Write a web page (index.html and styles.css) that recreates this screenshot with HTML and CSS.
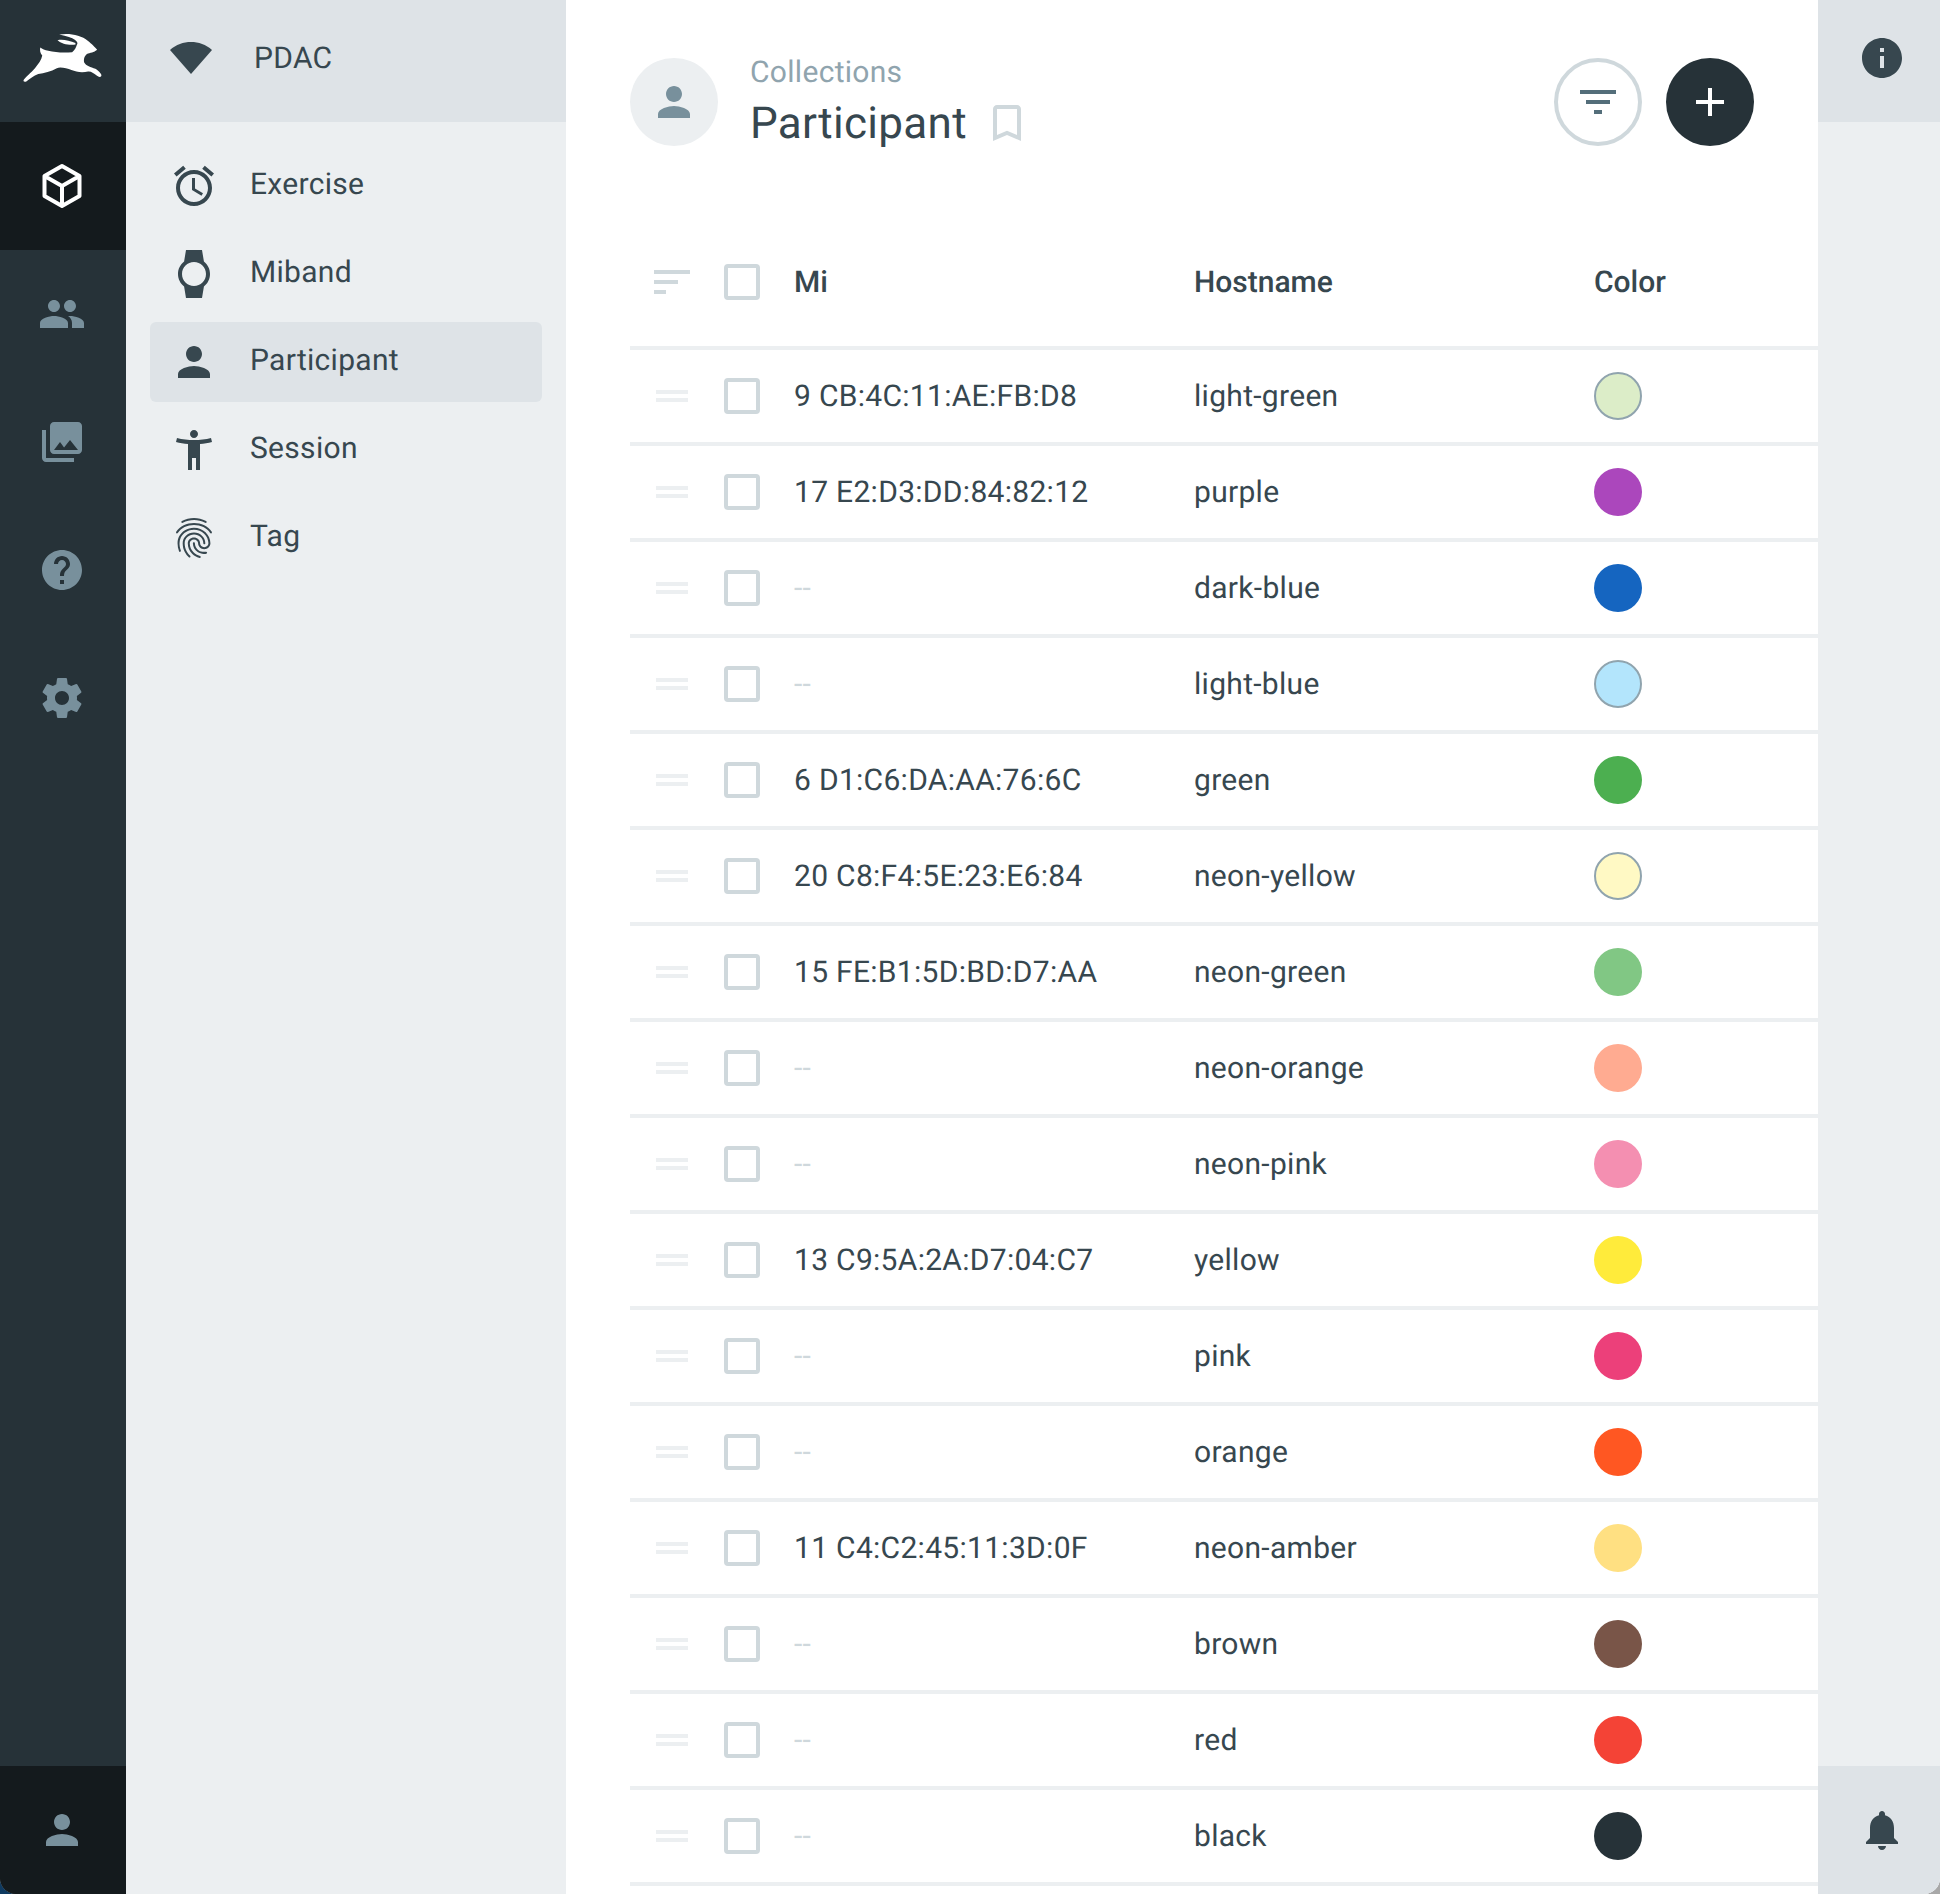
FILE: index.html
```html
<!DOCTYPE html>
<html lang="en">
<head>
<meta charset="utf-8">
<title>Participant</title>
<link rel="stylesheet" href="styles.css">
</head>
<body>
<div class="app">
  <nav class="rail">
    <div class="rail-logo">
      <svg class="logo" viewBox="60 90 250 170"><path fill="#fff" d="M68 240C72 232 92 216 102 204C112 192 122 180 124 166C118 160 116 150 118 142C124 146 132 150 142 152C165 158 195 158 214 156C222 150 226 140 228 134C236 126 222 112 175 103C205 98 240 104 262 122C272 130 284 142 289 148C286 154 272 158 262 160C252 164 248 176 250 186C256 198 270 200 284 206C294 212 304 222 302 228C298 233 292 230 286 225C278 219 272 213 262 214C246 218 226 216 212 210C198 204 178 200 168 204C150 214 130 218 112 222C98 226 86 238 76 244C70 246 66 244 68 240Z"/><path fill="#fff" d="M170 120C186 116 206 122 224 128L224 133C204 135 182 132 170 120Z"/></svg>
    </div>
    <a class="rail-item rail-item-active">
      <svg class="cube" viewBox="0 0 48 48"><path d="M24 4L41.5 14V34L24 44L6.5 34V14ZM6.5 14L24 24L41.5 14M24 24V44"/></svg>
    </a>
    <a class="rail-item"><svg class="icon icon-muted" viewBox="0 0 24 24"><path d="M16 11c1.66 0 2.99-1.34 2.99-3S17.66 5 16 5c-1.66 0-3 1.34-3 3s1.34 3 3 3zm-8 0c1.66 0 2.99-1.34 2.99-3S9.66 5 8 5C6.34 5 5 6.34 5 8s1.34 3 3 3zm0 2c-2.33 0-7 1.17-7 3.5V19h14v-2.5c0-2.33-4.67-3.5-7-3.5zm8 0c-.29 0-.62.02-.97.05 1.16.84 1.97 1.97 1.97 3.45V19h6v-2.5c0-2.33-4.67-3.5-7-3.5z"/></svg></a>
    <a class="rail-item"><svg class="icon icon-muted" viewBox="0 0 24 24"><path d="M22 16V4c0-1.1-.9-2-2-2H8c-1.1 0-2 .9-2 2v12c0 1.1.9 2 2 2h12c1.1 0 2-.9 2-2zm-11-4l2.03 2.71L16 11l4 5H8l3-4zM2 6v14c0 1.1.9 2 2 2h14v-2H4V6H2z"/></svg></a>
    <a class="rail-item"><svg class="icon icon-muted" viewBox="0 0 24 24"><path d="M12 2C6.48 2 2 6.48 2 12s4.48 10 10 10 10-4.48 10-10S17.52 2 12 2zm1 17h-2v-2h2v2zm2.07-7.75l-.9.92C13.45 12.9 13 13.5 13 15h-2v-.5c0-1.1.45-2.1 1.17-2.83l1.24-1.26c.37-.36.59-.86.59-1.41 0-1.1-.9-2-2-2s-2 .9-2 2H8c0-2.21 1.79-4 4-4s4 1.79 4 4c0 .88-.36 1.68-.93 2.25z"/></svg></a>
    <a class="rail-item"><svg class="icon icon-muted" viewBox="0 0 24 24"><path d="M19.43 12.98c.04-.32.07-.64.07-.98s-.03-.66-.07-.98l2.11-1.65c.19-.15.24-.42.12-.64l-2-3.46c-.12-.22-.39-.3-.61-.22l-2.49 1c-.52-.4-1.08-.73-1.69-.98l-.38-2.65C14.46 2.18 14.25 2 14 2h-4c-.25 0-.46.18-.49.42l-.38 2.65c-.61.25-1.17.59-1.69.98l-2.49-1c-.23-.09-.49 0-.61.22l-2 3.46c-.13.22-.07.49.12.64l2.11 1.65c-.04.32-.07.65-.07.98s.03.66.07.98l-2.11 1.65c-.19.15-.24.42-.12.64l2 3.46c.12.22.39.3.61.22l2.49-1c.52.4 1.08.73 1.69.98l.38 2.65c.03.24.24.42.49.42h4c.25 0 .46-.18.49-.42l.38-2.65c.61-.25 1.17-.59 1.69-.98l2.49 1c.23.09.49 0 .61-.22l2-3.46c.12-.22.07-.49-.12-.64l-2.11-1.65zM12 15.5c-1.93 0-3.5-1.57-3.5-3.5s1.57-3.5 3.5-3.5 3.5 1.57 3.5 3.5-1.57 3.5-3.5 3.5z"/></svg></a>
    <a class="rail-item rail-user"><svg class="icon icon-muted" viewBox="0 0 24 24"><path d="M12 12c2.21 0 4-1.79 4-4s-1.79-4-4-4-4 1.79-4 4 1.79 4 4 4zm0 2c-2.67 0-8 1.34-8 4v2h16v-2c0-2.66-5.33-4-8-4z"/></svg></a>
  </nav>

  <aside class="panel">
    <div class="panel-head">
      <svg class="sector" viewBox="0 0 42 32"><path d="M0 8C12-2.6 30-2.6 42 8L21 32Z"/></svg>
      <span class="panel-title">PDAC</span>
    </div>
    <ul class="collections">
      <li class="collection"><svg class="icon icon-dark" viewBox="0 0 24 24"><path d="M22 5.72l-4.6-3.86-1.29 1.53 4.6 3.86L22 5.72zM7.88 3.39L6.6 1.86 2 5.71l1.29 1.53 4.59-3.85zM12.5 8H11v6l4.75 2.85.75-1.23-4-2.37V8zM12 4c-4.97 0-9 4.03-9 9s4.02 9 9 9c4.97 0 9-4.03 9-9s-4.03-9-9-9zm0 16c-3.87 0-7-3.13-7-7s3.13-7 7-7 7 3.13 7 7-3.13 7-7 7z"/></svg><span class="collection-label">Exercise</span></li>
      <li class="collection"><svg class="icon icon-dark" viewBox="0 0 24 24"><path d="M20 12c0-2.54-1.19-4.81-3.04-6.27L16 0H8l-.95 5.73C5.19 7.19 4 9.45 4 12s1.19 4.81 3.05 6.27L8 24h8l.96-5.73C18.81 16.81 20 14.54 20 12zM6 12c0-3.31 2.69-6 6-6s6 2.69 6 6-2.69 6-6 6-6-2.69-6-6z"/></svg><span class="collection-label">Miband</span></li>
      <li class="collection collection-active"><svg class="icon icon-dark" viewBox="0 0 24 24"><path d="M12 12c2.21 0 4-1.79 4-4s-1.79-4-4-4-4 1.79-4 4 1.79 4 4 4zm0 2c-2.67 0-8 1.34-8 4v2h16v-2c0-2.66-5.33-4-8-4z"/></svg><span class="collection-label">Participant</span></li>
      <li class="collection"><svg class="icon icon-dark" viewBox="0 0 24 24"><path d="M20.5 6c-2.61.7-5.67 1-8.5 1s-5.89-.3-8.5-1L3 8c1.86.5 4 .83 6 1v13h2v-6h2v6h2V9c2-.17 4.14-.5 6-1l-.5-2zM12 6c1.1 0 2-.9 2-2s-.9-2-2-2-2 .9-2 2 .9 2 2 2z"/></svg><span class="collection-label">Session</span></li>
      <li class="collection"><svg class="icon icon-dark" viewBox="0 0 24 24"><path d="M17.81 4.47c-.08 0-.16-.02-.23-.06C15.66 3.42 14 3 12.01 3c-1.98 0-3.86.47-5.57 1.41-.24.13-.54.04-.68-.2-.13-.24-.04-.55.2-.68C7.82 2.52 9.86 2 12.01 2c2.13 0 3.99.47 6.03 1.52.25.13.34.43.21.67-.09.18-.26.28-.44.28zM3.5 9.72c-.1 0-.2-.03-.29-.09-.23-.16-.28-.47-.12-.7.99-1.4 2.25-2.5 3.75-3.27C9.98 4.04 14 4.03 17.15 5.65c1.5.77 2.76 1.86 3.75 3.25.16.22.11.54-.12.7-.23.16-.54.11-.7-.12-.9-1.26-2.04-2.25-3.39-2.94-2.87-1.47-6.54-1.47-9.4.01-1.36.7-2.5 1.7-3.4 2.96-.08.14-.23.21-.39.21zm6.25 12.07c-.13 0-.26-.05-.35-.15-.87-.87-1.34-1.43-2.01-2.64-.69-1.23-1.05-2.73-1.05-4.34 0-2.97 2.54-5.39 5.66-5.39s5.66 2.42 5.66 5.39c0 .28-.22.5-.5.5s-.5-.22-.5-.5c0-2.42-2.09-4.39-4.66-4.39-2.57 0-4.66 1.97-4.66 4.39 0 1.44.32 2.77.93 3.85.64 1.15 1.08 1.64 1.85 2.42.19.2.19.51 0 .71-.11.1-.24.15-.37.15zm7.17-1.85c-1.19 0-2.24-.3-3.1-.89-1.49-1.01-2.38-2.65-2.38-4.39 0-.28.22-.5.5-.5s.5.22.5.5c0 1.41.72 2.74 1.94 3.56.71.48 1.54.71 2.54.71.24 0 .64-.03 1.04-.1.27-.05.53.13.58.41.05.27-.13.53-.41.58-.57.11-1.07.12-1.21.12zM14.91 22c-.04 0-.09-.01-.13-.02-1.59-.44-2.63-1.03-3.72-2.1-1.4-1.39-2.17-3.24-2.17-5.22 0-1.62 1.38-2.94 3.08-2.94 1.7 0 3.08 1.32 3.08 2.94 0 1.07.93 1.94 2.08 1.94s2.08-.87 2.08-1.94c0-3.77-3.25-6.83-7.25-6.83-2.84 0-5.44 1.58-6.61 4.03-.39.81-.59 1.76-.59 2.8 0 .78.07 2.01.67 3.61.1.26-.03.55-.29.64-.26.1-.55-.04-.64-.29-.49-1.31-.73-2.61-.73-3.96 0-1.2.23-2.29.68-3.24 1.33-2.79 4.28-4.6 7.51-4.6 4.55 0 8.25 3.51 8.25 7.83 0 1.62-1.38 2.94-3.08 2.94s-3.08-1.32-3.08-2.94c0-1.07-.93-1.94-2.08-1.94s-2.08.87-2.08 1.94c0 1.71.66 3.31 1.87 4.51.95.94 1.86 1.46 3.27 1.85.27.07.42.35.35.61-.05.23-.26.38-.47.38z"/></svg><span class="collection-label">Tag</span></li>
    </ul>
  </aside>

  <main class="main">
    <header class="page-head">
      <div class="avatar"><svg class="icon icon-muted" viewBox="0 0 24 24"><path d="M12 12c2.21 0 4-1.79 4-4s-1.79-4-4-4-4 1.79-4 4 1.79 4 4 4zm0 2c-2.67 0-8 1.34-8 4v2h16v-2c0-2.66-5.33-4-8-4z"/></svg></div>
      <div class="titles">
        <div class="crumb">Collections</div>
        <div class="title-line">
          <h1 class="title">Participant</h1>
          <svg class="icon icon-line" viewBox="0 0 24 24"><path d="M17 3H7c-1.1 0-2 .9-2 2v16l7-3 7 3V5c0-1.1-.9-2-2-2zm0 15l-5-2.18L7 18V5h10v13z"/></svg>
        </div>
      </div>
      <div class="actions">
        <button class="btn btn-outline"><svg class="icon icon-slate" viewBox="0 0 24 24"><path d="M10 18h4v-2h-4v2zM3 6v2h18V6H3zm3 7h12v-2H6v2z"/></svg></button>
        <button class="btn btn-solid"><svg class="icon icon-white" viewBox="0 0 24 24"><path d="M19 13h-6v6h-2v-6H5v-2h6V5h2v6h6v2z"/></svg></button>
      </div>
    </header>

    <div class="table">
      <div class="row row-head">
        <div class="sort"><i class="sort-a"></i><i class="sort-b"></i><i class="sort-c"></i></div>
        <span class="check"></span>
        <span class="th">Mi</span><span class="th">Hostname</span><span class="th">Color</span>
      </div>
      <div class="row"><div class="handle"></div><span class="check"></span><span class="td">9 CB:4C:11:AE:FB:D8</span><span class="td">light-green</span><span class="swatch swatch-light c-light-green"></span></div>
      <div class="row"><div class="handle"></div><span class="check"></span><span class="td">17 E2:D3:DD:84:82:12</span><span class="td">purple</span><span class="swatch c-purple"></span></div>
      <div class="row"><div class="handle"></div><span class="check"></span><span class="td td-empty">--</span><span class="td">dark-blue</span><span class="swatch c-dark-blue"></span></div>
      <div class="row"><div class="handle"></div><span class="check"></span><span class="td td-empty">--</span><span class="td">light-blue</span><span class="swatch swatch-light c-light-blue"></span></div>
      <div class="row"><div class="handle"></div><span class="check"></span><span class="td">6 D1:C6:DA:AA:76:6C</span><span class="td">green</span><span class="swatch c-green"></span></div>
      <div class="row"><div class="handle"></div><span class="check"></span><span class="td">20 C8:F4:5E:23:E6:84</span><span class="td">neon-yellow</span><span class="swatch swatch-light c-neon-yellow"></span></div>
      <div class="row"><div class="handle"></div><span class="check"></span><span class="td">15 FE:B1:5D:BD:D7:AA</span><span class="td">neon-green</span><span class="swatch c-neon-green"></span></div>
      <div class="row"><div class="handle"></div><span class="check"></span><span class="td td-empty">--</span><span class="td">neon-orange</span><span class="swatch c-neon-orange"></span></div>
      <div class="row"><div class="handle"></div><span class="check"></span><span class="td td-empty">--</span><span class="td">neon-pink</span><span class="swatch c-neon-pink"></span></div>
      <div class="row"><div class="handle"></div><span class="check"></span><span class="td">13 C9:5A:2A:D7:04:C7</span><span class="td">yellow</span><span class="swatch c-yellow"></span></div>
      <div class="row"><div class="handle"></div><span class="check"></span><span class="td td-empty">--</span><span class="td">pink</span><span class="swatch c-pink"></span></div>
      <div class="row"><div class="handle"></div><span class="check"></span><span class="td td-empty">--</span><span class="td">orange</span><span class="swatch c-orange"></span></div>
      <div class="row"><div class="handle"></div><span class="check"></span><span class="td">11 C4:C2:45:11:3D:0F</span><span class="td">neon-amber</span><span class="swatch c-neon-amber"></span></div>
      <div class="row"><div class="handle"></div><span class="check"></span><span class="td td-empty">--</span><span class="td">brown</span><span class="swatch c-brown"></span></div>
      <div class="row"><div class="handle"></div><span class="check"></span><span class="td td-empty">--</span><span class="td">red</span><span class="swatch c-red"></span></div>
      <div class="row"><div class="handle"></div><span class="check"></span><span class="td td-empty">--</span><span class="td">black</span><span class="swatch c-black"></span></div>
    </div>
  </main>

  <aside class="side">
    <div class="side-top"><svg class="icon icon-dark" viewBox="0 0 24 24"><path d="M12 2C6.48 2 2 6.48 2 12s4.48 10 10 10 10-4.48 10-10S17.52 2 12 2zm1 15h-2v-6h2v6zm0-8h-2V7h2v2z"/></svg></div>
    <div class="side-bottom"><svg class="icon icon-dark" viewBox="0 0 24 24"><path d="M12 22c1.1 0 2-.9 2-2h-4c0 1.1.89 2 2 2zm6-6v-5c0-3.07-1.64-5.64-4.5-6.32V4c0-.83-.67-1.5-1.5-1.5s-1.5.67-1.5 1.5v.68C7.63 5.36 6 7.92 6 11v5l-2 2v1h16v-1l-2-2z"/></svg></div>
  </aside>
</div>
</body>
</html>
```
FILE: styles.css
```css
* { box-sizing: border-box; }
html, body { margin: 0; height: 100%; }
body {
  background: linear-gradient(to right, #0f3a60 50%, #a8a8a8 50%);
  font-family: Roboto, "Liberation Sans", sans-serif;
  color: #37474f;
  overflow: hidden;
  text-rendering: geometricPrecision;
}
.app {
  display: flex;
  width: 1940px;
  height: 1894px;
  border-radius: 0 0 16px 16px;
  overflow: hidden;
  background: #eceff1;
}
.icon { display: block; width: 48px; height: 48px; flex: none; }
.icon-muted { fill: #78909c; }
.icon-dark { fill: #37474f; }
.icon-line { fill: #cfd8dc; }
.icon-slate { fill: #546e7a; }
.icon-white { fill: #fff; }

.rail {
  display: flex;
  flex-direction: column;
  flex: none;
  width: 126px;
  background: #263238;
}
.rail-logo {
  display: flex;
  align-items: center;
  justify-content: center;
  height: 122px;
  padding: 0 2px 6px 0;
}
.logo { width: 83px; height: 57px; }
.rail-item {
  display: flex;
  align-items: center;
  justify-content: center;
  height: 128px;
  padding-right: 2px;
}
.rail-item-active { background: #141a1d; }
.rail-user { margin-top: auto; background: #141a1d; }
.cube { width: 48px; height: 48px; fill: none; stroke: #fff; stroke-width: 4; stroke-linejoin: round; }

.panel { flex: none; width: 440px; background: #eceff1; }
.panel-head {
  display: flex;
  align-items: center;
  gap: 42px;
  height: 122px;
  padding: 0 0 6px 44px;
  background: #dee3e7;
}
.sector { width: 42px; height: 32px; fill: #37474f; }
.panel-title { font-size: 30px; letter-spacing: .3px; }
.collections {
  display: flex;
  flex-direction: column;
  gap: 8px;
  margin: 0;
  padding: 24px 24px 0;
  list-style: none;
}
.collection {
  display: flex;
  align-items: center;
  gap: 32px;
  height: 80px;
  padding-left: 20px;
  border-radius: 6px;
}
.collection-active { background: #dee3e7; }
.collection-label { font-size: 30px; letter-spacing: .3px; padding-bottom: 4px; }

.main { flex: none; width: 1252px; padding: 58px 0 0 64px; background: #fff; }
.page-head { display: flex; align-items: center; height: 88px; padding-right: 64px; margin-bottom: 72px; }
.avatar {
  display: flex;
  align-items: center;
  justify-content: center;
  width: 88px;
  height: 88px;
  border-radius: 50%;
  background: #eceff1;
}
.titles { margin-left: 32px; padding-top: 2px; }
.crumb { margin-top: 1px; font-size: 30px; line-height: 30px; letter-spacing: .3px; color: #90a4ae; }
.title-line { display: flex; align-items: center; gap: 16px; margin-top: 9px; height: 52px; }
.title { margin: 0; font-size: 44px; line-height: 52px; font-weight: 400; letter-spacing: .3px; }
.actions { display: flex; gap: 24px; margin-left: auto; }
.btn {
  display: flex;
  align-items: center;
  justify-content: center;
  width: 88px;
  height: 88px;
  padding: 0;
  border-radius: 50%;
}
.btn-outline { background: #fff; border: 4px solid #cfd8dc; }
.btn-solid { background: #263238; border: 0; }

.row {
  display: grid;
  grid-template-columns: 94px 70px 400px 400px 1fr;
  align-items: center;
  height: 96px;
  border-bottom: 4px solid #eceff1;
}
.row-head { height: 132px; }
.sort { display: flex; flex-direction: column; gap: 6px; margin-left: 24px; }
.sort i { display: block; height: 4px; background: #cfd8dc; }
.sort-a { width: 36px; }
.sort-b { width: 24px; }
.sort-c { width: 12px; }
.handle {
  width: 32px;
  height: 12px;
  margin-left: 26px;
  border-top: 4px solid #eceff1;
  border-bottom: 4px solid #eceff1;
}
.check { width: 36px; height: 36px; border: 4px solid #cfd8dc; border-radius: 4px; background: #fff; }
.th { font-size: 30px; font-weight: 500; }
.td { font-size: 30px; letter-spacing: .3px; }
.td-empty { color: #cfd8dc; }
.swatch { width: 48px; height: 48px; border-radius: 50%; }
.swatch-light { border: 2px solid #90a4ae; }
.c-light-green { background: #dcedc8; }
.c-purple { background: #ab47bc; }
.c-dark-blue { background: #1565c0; }
.c-light-blue { background: #b3e5fc; }
.c-green { background: #4caf50; }
.c-neon-yellow { background: #fff9c4; }
.c-neon-green { background: #81c784; }
.c-neon-orange { background: #ffab91; }
.c-neon-pink { background: #f48fb1; }
.c-yellow { background: #ffeb3b; }
.c-pink { background: #ec407a; }
.c-orange { background: #ff5722; }
.c-neon-amber { background: #ffe082; }
.c-brown { background: #795548; }
.c-red { background: #f44336; }
.c-black { background: #263238; }

.side {
  display: flex;
  flex-direction: column;
  justify-content: space-between;
  flex: none;
  width: 122px;
  background: #eceff1;
}
.side-top, .side-bottom { display: flex; align-items: center; padding-left: 40px; background: #dee3e7; }
.side-top { height: 122px; padding-bottom: 6px; }
.side-bottom { height: 128px; }
```
